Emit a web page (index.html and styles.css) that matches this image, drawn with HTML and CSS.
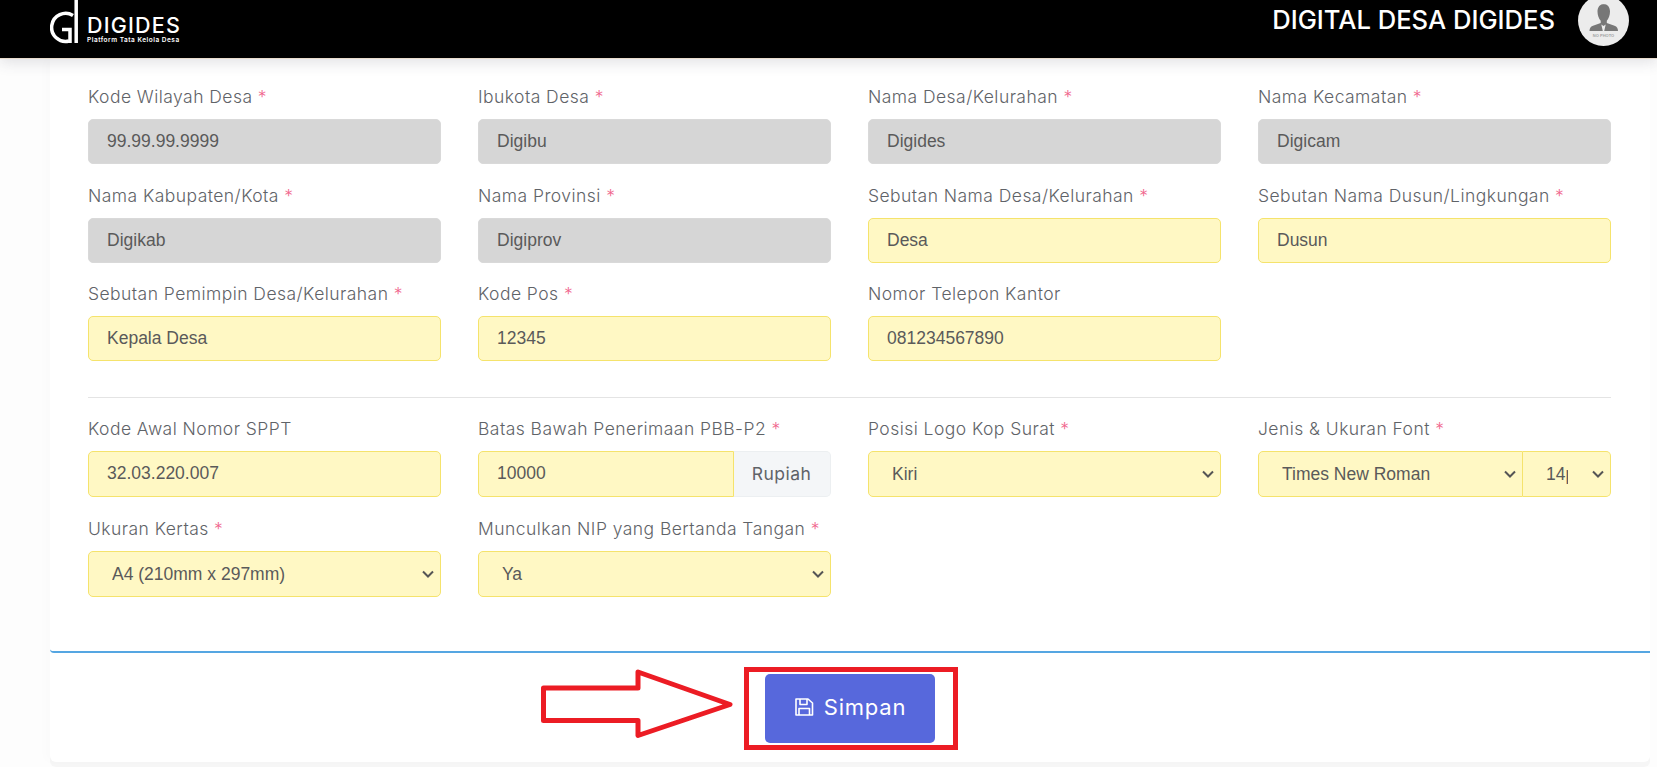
FILE: index.html
```html
<!DOCTYPE html>
<html lang="en">
<head>
  <meta charset="UTF-8">
  <meta name="viewport" content="width=device-width, initial-scale=1.0">
  <title>Digital Desa Digides</title>
  <link rel="stylesheet" href="styles.css">
</head>
<body>
  <header class="topbar">
    <div class="brand">
      <svg class="brand-mark" width="32" height="44" viewBox="0 0 32 44" fill="none" stroke="#fff">
        <path d="M23 15.500 A14 14 0 1 0 19 41" stroke-width="3.500"/>
        <path d="M12 29.500 H20 V43" stroke-width="3.500"/>
        <path d="M26.200 0 V43" stroke-width="3.500"/>
      </svg>
      <div class="brand-text">
        <div class="brand-name">DIGIDES</div>
        <div class="brand-tag">Platform Tata Kelola Desa</div>
      </div>
    </div>
    <div class="topbar-right">
      <span class="app-title">DIGITAL DESA DIGIDES</span>
      <div class="avatar">
        <svg width="51" height="51" viewBox="0 0 51 51">
          <circle cx="25.500" cy="25.500" r="25.500" fill="#ececec"/>
          <path d="M25.500 9c3.900 0 6.500 3 6.500 7.500 0 3.600-1.400 7.200-3.200 9.200v2.300l7.700 2.800c2.500.9 3.500 2.600 3.500 5.200H11.500c0-2.600 1-4.300 3.500-5.200l7.700-2.800v-2.300c-1.800-2-3.200-5.600-3.200-9.200 0-4.500 2.600-7.500 6.500-7.500z" fill="#777"/>
          <path d="M23.300 29.500l2.200 1.600 2.200-1.600-1.500 6.500h-1.400z" fill="#ececec"/>
          <text class="avatar-text" x="25.500" y="41.800">NO PHOTO</text>
        </svg>
      </div>
    </div>
  </header>

  <main class="card">
    <form class="card-body">
      <div class="form-grid">
        <div class="field">
          <label>Kode Wilayah Desa <span class="req">*</span></label>
          <input class="control locked" type="text" value="99.99.99.9999" readonly>
        </div>
        <div class="field">
          <label>Ibukota Desa <span class="req">*</span></label>
          <input class="control locked" type="text" value="Digibu" readonly>
        </div>
        <div class="field">
          <label>Nama Desa/Kelurahan <span class="req">*</span></label>
          <input class="control locked" type="text" value="Digides" readonly>
        </div>
        <div class="field">
          <label>Nama Kecamatan <span class="req">*</span></label>
          <input class="control locked" type="text" value="Digicam" readonly>
        </div>

        <div class="field">
          <label>Nama Kabupaten/Kota <span class="req">*</span></label>
          <input class="control locked" type="text" value="Digikab" readonly>
        </div>
        <div class="field">
          <label>Nama Provinsi <span class="req">*</span></label>
          <input class="control locked" type="text" value="Digiprov" readonly>
        </div>
        <div class="field">
          <label>Sebutan Nama Desa/Kelurahan <span class="req">*</span></label>
          <input class="control" type="text" value="Desa">
        </div>
        <div class="field">
          <label>Sebutan Nama Dusun/Lingkungan <span class="req">*</span></label>
          <input class="control" type="text" value="Dusun">
        </div>

        <div class="field">
          <label>Sebutan Pemimpin Desa/Kelurahan <span class="req">*</span></label>
          <input class="control" type="text" value="Kepala Desa">
        </div>
        <div class="field">
          <label>Kode Pos <span class="req">*</span></label>
          <input class="control" type="text" value="12345">
        </div>
        <div class="field">
          <label>Nomor Telepon Kantor</label>
          <input class="control" type="text" value="081234567890">
        </div>
      </div>

      <hr class="divider">

      <div class="form-grid form-grid-tall">
        <div class="field">
          <label>Kode Awal Nomor SPPT</label>
          <input class="control" type="text" value="32.03.220.007">
        </div>
        <div class="field">
          <label>Batas Bawah Penerimaan PBB-P2 <span class="req">*</span></label>
          <div class="input-group">
            <input class="control" type="text" value="10000">
            <span class="addon">Rupiah</span>
          </div>
        </div>
        <div class="field">
          <label>Posisi Logo Kop Surat <span class="req">*</span></label>
          <select class="control">
            <option>Kiri</option>
            <option>Kanan</option>
          </select>
        </div>
        <div class="field">
          <label>Jenis &amp; Ukuran Font <span class="req">*</span></label>
          <div class="input-group">
            <select class="control font-name">
              <option>Times New Roman</option>
              <option>Arial</option>
            </select>
            <select class="control font-size">
              <option>14pt</option>
              <option>12pt</option>
            </select>
          </div>
        </div>

        <div class="field">
          <label>Ukuran Kertas <span class="req">*</span></label>
          <select class="control">
            <option>A4 (210mm x 297mm)</option>
            <option>F4 (215mm x 330mm)</option>
          </select>
        </div>
        <div class="field">
          <label>Munculkan NIP yang Bertanda Tangan <span class="req">*</span></label>
          <select class="control">
            <option>Ya</option>
            <option>Tidak</option>
          </select>
        </div>
      </div>
    </form>

    <div class="card-footer">
      <svg class="arrow" width="198" height="72" viewBox="0 0 198 72" fill="none" stroke="#ec1c24" stroke-width="5" stroke-linejoin="round">
        <path d="M4.500 21 H99 V5 L191 37.500 L99 68.500 V53.500 H4.500 Z"/>
      </svg>
      <div class="mark-box">
        <button class="btn-save" type="button">
          <svg width="20" height="20" viewBox="0 0 20 20" fill="none" stroke="#fff" stroke-width="1.600" stroke-linejoin="round">
            <path d="M2 2 H14 L18.500 6 V18 H2 Z"/>
            <path d="M6 2 V7.500 H13 V2"/>
            <path d="M5 18 V11.500 H15.500 V18"/>
          </svg>
          Simpan
        </button>
      </div>
    </div>
  </main>
</body>
</html>
```

FILE: styles.css
```css
* {
  box-sizing: border-box;
}
html, body {
  height: 100%;
}
body {
  margin: 0;
  height: 767px;
  overflow: hidden;
  background-color: #fdfdfd;
  font-family: "Liberation Sans", Arial, sans-serif;
}

/* header */
.topbar {
  position: relative;
  z-index: 2;
  height: 59px;
  padding: 0 28px 0 50px;
  display: flex;
  align-items: flex-start;
  justify-content: space-between;
  background-color: #000;
  border-bottom: 1px solid #e9dccd;
  box-shadow: 0 3px 14px rgba(60, 60, 80, 0.16);
  color: #fff;
}
.brand {
  display: flex;
  align-items: flex-start;
}
.brand-mark {
  display: block;
}
.brand-text {
  margin: 14px 0 0 5px;
  font-family: Inter, sans-serif;
}
.brand-name {
  font-size: 21.500px;
  line-height: 22px;
  font-weight: 500;
  letter-spacing: 1.200px;
}
.brand-tag {
  font-size: 6.500px;
  line-height: 8px;
  font-weight: 600;
  letter-spacing: 0.500px;
}
.topbar-right {
  display: flex;
  align-items: flex-start;
}
.app-title {
  margin: 3px 23px 0 0;
  font-family: Inter, sans-serif;
  font-size: 25.600px;
  line-height: 34px;
  font-weight: 500;
}
.avatar {
  margin-top: -5px;
  height: 51px;
}
.avatar-text {
  font-family: "Liberation Sans", sans-serif;
  font-size: 4px;
  font-weight: 700;
  fill: #a3a3a3;
  text-anchor: middle;
}

/* card */
.card {
  margin: 0 7px 0 50px;
  height: 703px;
  background-color: #fff;
  border-radius: 0 0 6px 6px;
  box-shadow: -6px 0 8px rgba(0, 0, 0, 0.012), 0 5px 0 #f6f6f6;
}
.card-body {
  height: 594px;
  padding: 26px 39px 0 38px;
  border-bottom: 2px solid #55a6e2;
  border-radius: 0 0 0 4px;
}
.form-grid {
  display: grid;
  grid-template-columns: repeat(4, 352.500px);
  column-gap: 37.500px;
  row-gap: 19.500px;
}
.field label {
  display: block;
  height: 24px;
  margin-bottom: 10px;
  font-family: Inter, sans-serif;
  font-size: 17.500px;
  line-height: 24px;
  font-weight: 300;
  letter-spacing: 0.450px;
  color: #5f6368;
  white-space: nowrap;
}
.req {
  color: #f0648c;
}
.control {
  display: block;
  width: 100%;
  height: 45px;
  padding: 0 18px;
  border: 1px solid #f5e36c;
  border-radius: 5px;
  background-color: #fff8c4;
  font-family: "Liberation Sans", Arial, sans-serif;
  font-size: 17.500px;
  color: #5a5a5a;
  outline: none;
}
.control.locked {
  background-color: #d6d6d6;
  border-color: #d9d9d9;
}
select.control {
  appearance: none;
  padding: 0 30px 0 23px;
  background-image: url("data:image/svg+xml,%3Csvg xmlns='http://www.w3.org/2000/svg' width='12' height='8' viewBox='0 0 12 8'%3E%3Cpath d='M1 1.500l5 5 5-5' fill='none' stroke='%23555' stroke-width='2'/%3E%3C/svg%3E");
  background-repeat: no-repeat;
  background-position: right 6px center;
}
.form-grid-tall {
  row-gap: 20px;
}
.form-grid-tall .control {
  height: 46px;
}
.divider {
  margin: 35.500px 0 19px;
  border: 0;
  border-top: 1px solid #e4e4e4;
}
.input-group {
  display: flex;
}
.input-group .control {
  flex: 1;
  min-width: 0;
  border-radius: 5px 0 0 5px;
}
.addon {
  width: 97px;
  height: 46px;
  display: flex;
  align-items: center;
  justify-content: center;
  background-color: #f4f6f8;
  border: 1px solid #eceff1;
  border-left: 0;
  border-radius: 0 5px 5px 0;
  font-family: Inter, sans-serif;
  font-size: 17.500px;
  font-weight: 400;
  letter-spacing: 0.500px;
  color: #5f6368;
}
.input-group .font-name {
  flex: none;
  width: 265px;
}
.input-group .font-size {
  flex: 1;
  padding-right: 42px;
  border-left: 0;
  border-radius: 0 5px 5px 0;
}

/* footer with the save button */
.card-footer {
  display: flex;
  align-items: flex-start;
  padding: 14px 0 0 489px;
}
.arrow {
  flex: none;
  margin: 0 7px 0 0;
}
.mark-box {
  width: 214px;
  height: 83px;
  padding: 2px 0 0 16px;
  border: 5px solid #ec1c24;
}
.btn-save {
  width: 170px;
  height: 69px;
  padding: 0 0 3px;
  display: flex;
  align-items: center;
  justify-content: center;
  gap: 10px;
  background-color: #5768dc;
  border: 0;
  border-radius: 5px;
  font-family: Inter, sans-serif;
  font-size: 22px;
  font-weight: 400;
  letter-spacing: 0.800px;
  color: #fff;
}
```
